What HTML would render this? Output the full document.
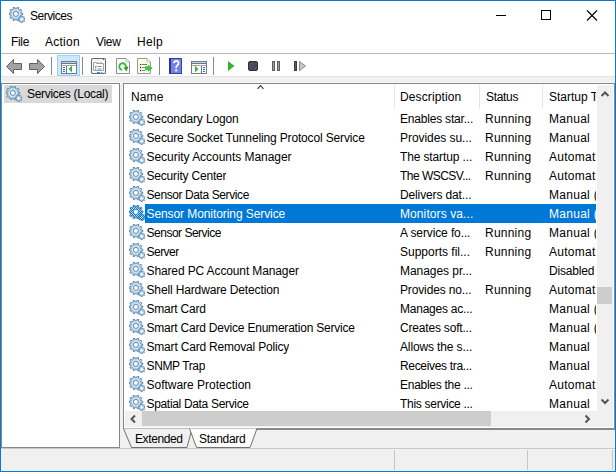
<!DOCTYPE html>
<html><head><meta charset="utf-8"><style>
*{box-sizing:border-box}
html,body{margin:0;padding:0}
body{width:616px;height:472px;overflow:hidden;position:relative;background:#f0f0f0;font-family:"Liberation Sans",sans-serif;font-size:12px;color:#000}
.a{position:absolute}
.t{position:absolute;white-space:nowrap;line-height:14px}
#frame{position:absolute;left:0;top:0;width:616px;height:472px;border:1px solid #0b78d0;z-index:50;pointer-events:none}
.row{position:absolute;left:124px;width:472px;height:19px}
.row .ic{position:absolute;left:5px;top:1px;width:16px;height:16px}
.row span{position:absolute;top:3px;white-space:nowrap;line-height:14px;overflow:hidden}
.c1{left:22.5px}
.c2{left:276px;width:78px}
.c3{left:361px}
.c4{left:425px;width:47px}
.row.sel::before{content:"";position:absolute;left:21px;top:0;right:0;height:19px;background:#0078d7}
.row.sel span{color:#fff}
.hsep{position:absolute;top:85px;width:1px;height:24px;background:#e5e5e5}
</style></head><body>
<div id="frame"></div>
<div class="a" style="left:0;top:0;width:616px;height:76px;background:#fff"></div>
<div class="a" style="left:9px;top:7px;width:16px;height:16px"><svg width="16" height="16" viewBox="0 0 16 16"><path d="M12.13,6.07 L13.75,6.04 L13.75,7.76 L12.13,7.73 L11.62,9.31 L12.95,10.22 L11.93,11.62 L10.65,10.65 L9.31,11.62 L9.84,13.14 L8.19,13.68 L7.73,12.13 L6.07,12.13 L5.61,13.68 L3.96,13.14 L4.49,11.62 L3.15,10.65 L1.87,11.62 L0.85,10.22 L2.18,9.31 L1.67,7.73 L0.05,7.76 L0.05,6.04 L1.67,6.07 L2.18,4.49 L0.85,3.58 L1.87,2.18 L3.15,3.15 L4.49,2.18 L3.96,0.66 L5.61,0.12 L6.07,1.67 L7.73,1.67 L8.19,0.12 L9.84,0.66 L9.31,2.18 L10.65,3.15 L11.93,2.18 L12.95,3.58 L11.62,4.49Z" fill="#c6e2f3" stroke="#5f88ad" stroke-width="1"/><circle cx="6.9" cy="6.9" r="2.5" fill="#fff" stroke="#5a7b9a" stroke-width="0.9"/><path d="M15.15,11.81 L16.06,11.77 L16.06,12.83 L15.15,12.79 L14.78,13.69 L15.45,14.30 L14.70,15.05 L14.09,14.38 L13.19,14.75 L13.23,15.66 L12.17,15.66 L12.21,14.75 L11.31,14.38 L10.70,15.05 L9.95,14.30 L10.62,13.69 L10.25,12.79 L9.34,12.83 L9.34,11.77 L10.25,11.81 L10.62,10.91 L9.95,10.30 L10.70,9.55 L11.31,10.22 L12.21,9.85 L12.17,8.94 L13.23,8.94 L13.19,9.85 L14.09,10.22 L14.70,9.55 L15.45,10.30 L14.78,10.91Z" fill="#c6e2f3" stroke="#5a86ad" stroke-width="0.9"/><circle cx="12.7" cy="12.3" r="1.0" fill="#fff"/></svg></div>
<div class="t" id="ttl" style="left:30px;top:9px;letter-spacing:-0.514px">Services</div>
<div class="a" style="left:496px;top:15px;width:10px;height:1px;background:#000"></div>
<div class="a" style="left:541px;top:10px;width:10px;height:10px;border:1px solid #000"></div>
<svg class="a" style="left:586px;top:10px" width="12" height="11" viewBox="0 0 12 11"><path d="M1,0.5 L11,10.5 M11,0.5 L1,10.5" stroke="#000" stroke-width="1.1"/></svg>
<div class="t" id="mf" style="left:11px;top:35px;letter-spacing:-0.333px">File</div>
<div class="t" id="ma" style="left:45px;top:35px;letter-spacing:0.240px">Action</div>
<div class="t" id="mv" style="left:96px;top:35px;letter-spacing:-0.333px">View</div>
<div class="t" id="mh" style="left:137px;top:35px;letter-spacing:0.333px">Help</div>
<div class="a" style="left:0;top:53px;width:616px;height:1px;background:#b9b9b9"></div>
<svg class="a" style="left:0;top:0" width="616" height="80" viewBox="0 0 616 80">
<!-- back -->
<path d="M6.5,66.5 L13.5,59.5 L13.5,63.5 L21.5,63.5 L21.5,69.5 L13.5,69.5 L13.5,73.5 Z" fill="#a2a2a2" stroke="#626262" stroke-width="1"/>
<!-- forward -->
<path d="M44.5,66.5 L37.5,59.5 L37.5,63.5 L29.5,63.5 L29.5,69.5 L37.5,69.5 L37.5,73.5 Z" fill="#a2a2a2" stroke="#626262" stroke-width="1"/>
<rect x="51" y="57" width="1" height="18" fill="#8a8a8a"/>
<!-- hover button -->
<rect x="57.5" y="55.5" width="22" height="20" fill="#cce8ff" stroke="#99d1ff" stroke-width="1"/>
<rect x="61.5" y="61.5" width="15" height="12" fill="#fff" stroke="#7a7a7a" stroke-width="1"/>
<rect x="62" y="62" width="14" height="1" fill="#d0d0d0"/>
<rect x="62" y="63" width="14" height="1" fill="#5a7aa0"/>
<rect x="62" y="65" width="14" height="1" fill="#a8a8a8"/>
<rect x="66" y="66" width="1" height="7" fill="#5a7aa0"/>
<rect x="63" y="67" width="2" height="1" fill="#2a6ac8"/><rect x="63" y="69" width="2" height="1" fill="#2a6ac8"/><rect x="63" y="71" width="2" height="1" fill="#2a6ac8"/>
<path d="M68.5,69 L72,65.5 L72,72.5 Z" fill="#3cb83c"/>
<rect x="82" y="57" width="1" height="18" fill="#8a8a8a"/>
<!-- properties -->
<rect x="91.5" y="58.5" width="14" height="15" rx="1.2" fill="#fff" stroke="#6a6a6a" stroke-width="1.1"/>
<rect x="92.5" y="59.5" width="12" height="1" fill="#e4e4e4"/>
<rect x="103" y="59" width="1" height="1" fill="#3a5a9a"/>
<path d="M93.5,70.5 L93.5,62.5 L96.5,62.5 L96.5,63.5 L103.5,63.5 L103.5,70.5 Z" fill="#fff" stroke="#9aa4b0" stroke-width="1"/>
<rect x="97" y="62" width="2" height="1" fill="#b0cce8"/><rect x="100" y="62" width="2" height="1" fill="#b0cce8"/>
<rect x="95" y="66" width="1.5" height="1.5" fill="#1e90ff"/><rect x="95" y="68.5" width="1.2" height="1.2" fill="#8a8a8a"/>
<rect x="97.5" y="66" width="4" height="1" fill="#8a8a8a"/><rect x="97.5" y="68.5" width="4" height="1" fill="#8a8a8a"/>
<rect x="97" y="72" width="3" height="1.2" fill="#1e90ff"/><rect x="101" y="72" width="2" height="1" fill="#b0b0b0"/>
<!-- refresh page -->
<path d="M116.5,58.5 L126,58.5 L129.5,62 L129.5,73.5 L116.5,73.5 Z" fill="#fff" stroke="#8e8e9a" stroke-width="1"/><path d="M126,59 L126,62 L129,62" fill="#fff" stroke="#b0b0b8" stroke-width="0.8"/>
<path d="M121.9,69.8 A3.3,3.3 0 1 1 125.8,67.1" fill="none" stroke="#3cbf3c" stroke-width="2"/>
<path d="M123.5,67.5 L128.5,66.5 L126.5,71.5 Z" fill="#2aa02a"/>
<!-- export page -->
<path d="M137.5,58.5 L147,58.5 L150.5,62 L150.5,73.5 L137.5,73.5 Z" fill="#fdfbe6" stroke="#9a9aa6" stroke-width="1"/>
<path d="M147,59 L147,62 L150,62" fill="#fff" stroke="#b0b0b8" stroke-width="0.8"/>
<rect x="140" y="64" width="1.2" height="1.2" fill="#222"/><rect x="140" y="67" width="1.2" height="1.2" fill="#222"/><rect x="140" y="70" width="1.2" height="1.2" fill="#222"/>
<rect x="142" y="64" width="5" height="1" fill="#777"/><rect x="142" y="67" width="3" height="1" fill="#888"/><rect x="142" y="70" width="3" height="1" fill="#888"/>
<path d="M145,66.3 L148,66.3 L148,64.5 L152.8,68.2 L148,71.8 L148,70.2 L145,70.2 Z" fill="#46c546"/>
<rect x="159" y="57" width="1" height="18" fill="#8a8a8a"/>
<!-- help book -->
<rect x="169" y="58" width="13" height="16" fill="#3044b8"/>
<rect x="171" y="59" width="10" height="14" fill="#7482dc"/>
<rect x="169" y="58" width="2" height="16" fill="#2a34a0"/>
<path d="M173.9,63.2 Q174.2,60.8 176.3,60.8 Q178.6,60.8 178.6,63 Q178.6,64.6 177,65.6 Q176.2,66.2 176.2,68" fill="none" stroke="#fff" stroke-width="1.8"/>
<rect x="175.2" y="69.4" width="2" height="2" fill="#fff"/>
<!-- window 2 -->
<rect x="191.5" y="61.5" width="15" height="12" fill="#fff" stroke="#7a7a7a" stroke-width="1"/>
<rect x="192" y="62" width="14" height="1" fill="#d0d0d0"/>
<rect x="192" y="63" width="14" height="1" fill="#5a7aa0"/>
<rect x="192" y="65" width="14" height="1" fill="#a8a8a8"/>
<rect x="201" y="66" width="1" height="7" fill="#5a7aa0"/>
<path d="M195,65.5 L198.5,69 L195,72.5 Z" fill="#3cb83c"/>
<rect x="203" y="67" width="2" height="1" fill="#2a6ac8"/><rect x="203" y="69" width="2" height="1" fill="#2a6ac8"/><rect x="203" y="71" width="2" height="1" fill="#2a6ac8"/>
<rect x="213" y="57" width="1" height="18" fill="#8a8a8a"/>
<!-- play -->
<path d="M228,61 L234.5,66 L228,71 Z" fill="#2fb52f"/>
<!-- stop -->
<rect x="248.5" y="61.5" width="9" height="9" rx="1.5" fill="#4a4a5a" stroke="#30303c" stroke-width="1"/><rect x="251" y="63" width="1" height="1" fill="#8a5a3a"/><rect x="254" y="64" width="1" height="1" fill="#7a3030"/><rect x="250" y="66" width="1" height="1" fill="#7a5a40"/><rect x="253" y="67" width="1" height="1" fill="#6a3a3a"/><rect x="255" y="68" width="1" height="1" fill="#8a6a4a"/><rect x="251" y="69" width="1" height="1" fill="#7a5040"/>
<!-- pause -->
<rect x="272.5" y="61.5" width="2" height="9" fill="#9a9a9a" stroke="#606060" stroke-width="1"/>
<rect x="277.5" y="61.5" width="2" height="9" fill="#9a9a9a" stroke="#606060" stroke-width="1"/>
<!-- resume -->
<rect x="294.5" y="61.5" width="2" height="9" fill="#5a5a6a" stroke="#3a3a48" stroke-width="1"/>
<path d="M299.5,61.5 L305.5,66 L299.5,70.5 Z" fill="#c8c8c8" stroke="#8a8a8a" stroke-width="1"/>
</svg>
<div class="a" style="left:1px;top:76px;width:614px;height:1px;background:#e3e3e3"></div>
<div class="a" style="left:1px;top:82px;width:614px;height:1px;background:#f8f8f8"></div>
<!-- left pane -->
<div class="a" style="left:1px;top:83px;width:119px;height:365px;background:#fff;border:1px solid #828790"></div>
<div class="a" style="left:4px;top:85px;width:108px;height:18px;background:#d9d9d9"></div>
<div class="a" style="left:6px;top:86px;width:16px;height:16px"><svg width="16" height="16" viewBox="0 0 16 16"><path d="M12.13,6.07 L13.75,6.04 L13.75,7.76 L12.13,7.73 L11.62,9.31 L12.95,10.22 L11.93,11.62 L10.65,10.65 L9.31,11.62 L9.84,13.14 L8.19,13.68 L7.73,12.13 L6.07,12.13 L5.61,13.68 L3.96,13.14 L4.49,11.62 L3.15,10.65 L1.87,11.62 L0.85,10.22 L2.18,9.31 L1.67,7.73 L0.05,7.76 L0.05,6.04 L1.67,6.07 L2.18,4.49 L0.85,3.58 L1.87,2.18 L3.15,3.15 L4.49,2.18 L3.96,0.66 L5.61,0.12 L6.07,1.67 L7.73,1.67 L8.19,0.12 L9.84,0.66 L9.31,2.18 L10.65,3.15 L11.93,2.18 L12.95,3.58 L11.62,4.49Z" fill="#c6e2f3" stroke="#5f88ad" stroke-width="1"/><circle cx="6.9" cy="6.9" r="2.5" fill="#fff" stroke="#5a7b9a" stroke-width="0.9"/><path d="M15.15,11.81 L16.06,11.77 L16.06,12.83 L15.15,12.79 L14.78,13.69 L15.45,14.30 L14.70,15.05 L14.09,14.38 L13.19,14.75 L13.23,15.66 L12.17,15.66 L12.21,14.75 L11.31,14.38 L10.70,15.05 L9.95,14.30 L10.62,13.69 L10.25,12.79 L9.34,12.83 L9.34,11.77 L10.25,11.81 L10.62,10.91 L9.95,10.30 L10.70,9.55 L11.31,10.22 L12.21,9.85 L12.17,8.94 L13.23,8.94 L13.19,9.85 L14.09,10.22 L14.70,9.55 L15.45,10.30 L14.78,10.91Z" fill="#c6e2f3" stroke="#5a86ad" stroke-width="0.9"/><circle cx="12.7" cy="12.3" r="1.0" fill="#fff"/></svg></div>
<div class="t" id="sl" style="left:27px;top:87px;letter-spacing:-0.307px">Services (Local)</div>
<!-- right pane -->
<div class="a" style="left:123px;top:83px;width:492px;height:346px;background:#fff;border:1px solid #828790"></div>
<div class="t" id="hn" style="left:131px;top:90px;letter-spacing:0.133px">Name</div>
<svg class="a" style="left:256px;top:84px" width="10" height="6" viewBox="0 0 10 6"><path d="M1.5,4.8 L4.5,1.6 L7.5,4.8" fill="none" stroke="#3a3a3a" stroke-width="1.1"/></svg>
<div class="hsep" style="left:394px"></div>
<div class="t" id="hd" style="left:400px;top:90px;letter-spacing:0.120px">Description</div>
<div class="hsep" style="left:479px"></div>
<div class="t" id="hs" style="left:486px;top:90px;letter-spacing:-0.320px">Status</div>
<div class="hsep" style="left:542px"></div>
<div class="t" style="left:549px;top:90px;width:47px;overflow:hidden">Startup Type</div>
<div class="row" style="top:109px"><div class="ic"><svg width="16" height="16" viewBox="0 0 16 16"><path d="M12.13,6.07 L13.75,6.04 L13.75,7.76 L12.13,7.73 L11.62,9.31 L12.95,10.22 L11.93,11.62 L10.65,10.65 L9.31,11.62 L9.84,13.14 L8.19,13.68 L7.73,12.13 L6.07,12.13 L5.61,13.68 L3.96,13.14 L4.49,11.62 L3.15,10.65 L1.87,11.62 L0.85,10.22 L2.18,9.31 L1.67,7.73 L0.05,7.76 L0.05,6.04 L1.67,6.07 L2.18,4.49 L0.85,3.58 L1.87,2.18 L3.15,3.15 L4.49,2.18 L3.96,0.66 L5.61,0.12 L6.07,1.67 L7.73,1.67 L8.19,0.12 L9.84,0.66 L9.31,2.18 L10.65,3.15 L11.93,2.18 L12.95,3.58 L11.62,4.49Z" fill="#c6e2f3" stroke="#5f88ad" stroke-width="1"/><circle cx="6.9" cy="6.9" r="2.5" fill="#fff" stroke="#5a7b9a" stroke-width="0.9"/><path d="M15.15,11.81 L16.06,11.77 L16.06,12.83 L15.15,12.79 L14.78,13.69 L15.45,14.30 L14.70,15.05 L14.09,14.38 L13.19,14.75 L13.23,15.66 L12.17,15.66 L12.21,14.75 L11.31,14.38 L10.70,15.05 L9.95,14.30 L10.62,13.69 L10.25,12.79 L9.34,12.83 L9.34,11.77 L10.25,11.81 L10.62,10.91 L9.95,10.30 L10.70,9.55 L11.31,10.22 L12.21,9.85 L12.17,8.94 L13.23,8.94 L13.19,9.85 L14.09,10.22 L14.70,9.55 L15.45,10.30 L14.78,10.91Z" fill="#c6e2f3" stroke="#5a86ad" stroke-width="0.9"/><circle cx="12.7" cy="12.3" r="1.0" fill="#fff"/></svg></div><span class="c1" id="r0n" style="letter-spacing:-0.129px">Secondary Logon</span><span class="c2" id="r0d" style="letter-spacing:-0.200px">Enables star...</span><span class="c3" id="r0s" style="letter-spacing:0.233px">Running</span><span class="c4" id="r0t" style="letter-spacing:0.280px">Manual</span></div>
<div class="row" style="top:128px"><div class="ic"><svg width="16" height="16" viewBox="0 0 16 16"><path d="M12.13,6.07 L13.75,6.04 L13.75,7.76 L12.13,7.73 L11.62,9.31 L12.95,10.22 L11.93,11.62 L10.65,10.65 L9.31,11.62 L9.84,13.14 L8.19,13.68 L7.73,12.13 L6.07,12.13 L5.61,13.68 L3.96,13.14 L4.49,11.62 L3.15,10.65 L1.87,11.62 L0.85,10.22 L2.18,9.31 L1.67,7.73 L0.05,7.76 L0.05,6.04 L1.67,6.07 L2.18,4.49 L0.85,3.58 L1.87,2.18 L3.15,3.15 L4.49,2.18 L3.96,0.66 L5.61,0.12 L6.07,1.67 L7.73,1.67 L8.19,0.12 L9.84,0.66 L9.31,2.18 L10.65,3.15 L11.93,2.18 L12.95,3.58 L11.62,4.49Z" fill="#c6e2f3" stroke="#5f88ad" stroke-width="1"/><circle cx="6.9" cy="6.9" r="2.5" fill="#fff" stroke="#5a7b9a" stroke-width="0.9"/><path d="M15.15,11.81 L16.06,11.77 L16.06,12.83 L15.15,12.79 L14.78,13.69 L15.45,14.30 L14.70,15.05 L14.09,14.38 L13.19,14.75 L13.23,15.66 L12.17,15.66 L12.21,14.75 L11.31,14.38 L10.70,15.05 L9.95,14.30 L10.62,13.69 L10.25,12.79 L9.34,12.83 L9.34,11.77 L10.25,11.81 L10.62,10.91 L9.95,10.30 L10.70,9.55 L11.31,10.22 L12.21,9.85 L12.17,8.94 L13.23,8.94 L13.19,9.85 L14.09,10.22 L14.70,9.55 L15.45,10.30 L14.78,10.91Z" fill="#c6e2f3" stroke="#5a86ad" stroke-width="0.9"/><circle cx="12.7" cy="12.3" r="1.0" fill="#fff"/></svg></div><span class="c1" id="r1n" style="letter-spacing:-0.149px">Secure Socket Tunneling Protocol Service</span><span class="c2" id="r1d" style="letter-spacing:-0.062px">Provides su...</span><span class="c3" id="r1s" style="letter-spacing:0.233px">Running</span><span class="c4" id="r1t" style="letter-spacing:0.280px">Manual</span></div>
<div class="row" style="top:147px"><div class="ic"><svg width="16" height="16" viewBox="0 0 16 16"><path d="M12.13,6.07 L13.75,6.04 L13.75,7.76 L12.13,7.73 L11.62,9.31 L12.95,10.22 L11.93,11.62 L10.65,10.65 L9.31,11.62 L9.84,13.14 L8.19,13.68 L7.73,12.13 L6.07,12.13 L5.61,13.68 L3.96,13.14 L4.49,11.62 L3.15,10.65 L1.87,11.62 L0.85,10.22 L2.18,9.31 L1.67,7.73 L0.05,7.76 L0.05,6.04 L1.67,6.07 L2.18,4.49 L0.85,3.58 L1.87,2.18 L3.15,3.15 L4.49,2.18 L3.96,0.66 L5.61,0.12 L6.07,1.67 L7.73,1.67 L8.19,0.12 L9.84,0.66 L9.31,2.18 L10.65,3.15 L11.93,2.18 L12.95,3.58 L11.62,4.49Z" fill="#c6e2f3" stroke="#5f88ad" stroke-width="1"/><circle cx="6.9" cy="6.9" r="2.5" fill="#fff" stroke="#5a7b9a" stroke-width="0.9"/><path d="M15.15,11.81 L16.06,11.77 L16.06,12.83 L15.15,12.79 L14.78,13.69 L15.45,14.30 L14.70,15.05 L14.09,14.38 L13.19,14.75 L13.23,15.66 L12.17,15.66 L12.21,14.75 L11.31,14.38 L10.70,15.05 L9.95,14.30 L10.62,13.69 L10.25,12.79 L9.34,12.83 L9.34,11.77 L10.25,11.81 L10.62,10.91 L9.95,10.30 L10.70,9.55 L11.31,10.22 L12.21,9.85 L12.17,8.94 L13.23,8.94 L13.19,9.85 L14.09,10.22 L14.70,9.55 L15.45,10.30 L14.78,10.91Z" fill="#c6e2f3" stroke="#5a86ad" stroke-width="0.9"/><circle cx="12.7" cy="12.3" r="1.0" fill="#fff"/></svg></div><span class="c1" id="r2n" style="letter-spacing:-0.042px">Security Accounts Manager</span><span class="c2" id="r2d" style="letter-spacing:-0.129px">The startup ...</span><span class="c3" id="r2s" style="letter-spacing:0.233px">Running</span><span class="c4" id="r2t" style="letter-spacing:0.280px">Automat</span></div>
<div class="row" style="top:166px"><div class="ic"><svg width="16" height="16" viewBox="0 0 16 16"><path d="M12.13,6.07 L13.75,6.04 L13.75,7.76 L12.13,7.73 L11.62,9.31 L12.95,10.22 L11.93,11.62 L10.65,10.65 L9.31,11.62 L9.84,13.14 L8.19,13.68 L7.73,12.13 L6.07,12.13 L5.61,13.68 L3.96,13.14 L4.49,11.62 L3.15,10.65 L1.87,11.62 L0.85,10.22 L2.18,9.31 L1.67,7.73 L0.05,7.76 L0.05,6.04 L1.67,6.07 L2.18,4.49 L0.85,3.58 L1.87,2.18 L3.15,3.15 L4.49,2.18 L3.96,0.66 L5.61,0.12 L6.07,1.67 L7.73,1.67 L8.19,0.12 L9.84,0.66 L9.31,2.18 L10.65,3.15 L11.93,2.18 L12.95,3.58 L11.62,4.49Z" fill="#c6e2f3" stroke="#5f88ad" stroke-width="1"/><circle cx="6.9" cy="6.9" r="2.5" fill="#fff" stroke="#5a7b9a" stroke-width="0.9"/><path d="M15.15,11.81 L16.06,11.77 L16.06,12.83 L15.15,12.79 L14.78,13.69 L15.45,14.30 L14.70,15.05 L14.09,14.38 L13.19,14.75 L13.23,15.66 L12.17,15.66 L12.21,14.75 L11.31,14.38 L10.70,15.05 L9.95,14.30 L10.62,13.69 L10.25,12.79 L9.34,12.83 L9.34,11.77 L10.25,11.81 L10.62,10.91 L9.95,10.30 L10.70,9.55 L11.31,10.22 L12.21,9.85 L12.17,8.94 L13.23,8.94 L13.19,9.85 L14.09,10.22 L14.70,9.55 L15.45,10.30 L14.78,10.91Z" fill="#c6e2f3" stroke="#5a86ad" stroke-width="0.9"/><circle cx="12.7" cy="12.3" r="1.0" fill="#fff"/></svg></div><span class="c1" id="r3n" style="letter-spacing:-0.186px">Security Center</span><span class="c2" id="r3d" style="letter-spacing:-0.527px">The WSCSV...</span><span class="c3" id="r3s" style="letter-spacing:0.233px">Running</span><span class="c4" id="r3t" style="letter-spacing:0.280px">Automat</span></div>
<div class="row" style="top:185px"><div class="ic"><svg width="16" height="16" viewBox="0 0 16 16"><path d="M12.13,6.07 L13.75,6.04 L13.75,7.76 L12.13,7.73 L11.62,9.31 L12.95,10.22 L11.93,11.62 L10.65,10.65 L9.31,11.62 L9.84,13.14 L8.19,13.68 L7.73,12.13 L6.07,12.13 L5.61,13.68 L3.96,13.14 L4.49,11.62 L3.15,10.65 L1.87,11.62 L0.85,10.22 L2.18,9.31 L1.67,7.73 L0.05,7.76 L0.05,6.04 L1.67,6.07 L2.18,4.49 L0.85,3.58 L1.87,2.18 L3.15,3.15 L4.49,2.18 L3.96,0.66 L5.61,0.12 L6.07,1.67 L7.73,1.67 L8.19,0.12 L9.84,0.66 L9.31,2.18 L10.65,3.15 L11.93,2.18 L12.95,3.58 L11.62,4.49Z" fill="#c6e2f3" stroke="#5f88ad" stroke-width="1"/><circle cx="6.9" cy="6.9" r="2.5" fill="#fff" stroke="#5a7b9a" stroke-width="0.9"/><path d="M15.15,11.81 L16.06,11.77 L16.06,12.83 L15.15,12.79 L14.78,13.69 L15.45,14.30 L14.70,15.05 L14.09,14.38 L13.19,14.75 L13.23,15.66 L12.17,15.66 L12.21,14.75 L11.31,14.38 L10.70,15.05 L9.95,14.30 L10.62,13.69 L10.25,12.79 L9.34,12.83 L9.34,11.77 L10.25,11.81 L10.62,10.91 L9.95,10.30 L10.70,9.55 L11.31,10.22 L12.21,9.85 L12.17,8.94 L13.23,8.94 L13.19,9.85 L14.09,10.22 L14.70,9.55 L15.45,10.30 L14.78,10.91Z" fill="#c6e2f3" stroke="#5a86ad" stroke-width="0.9"/><circle cx="12.7" cy="12.3" r="1.0" fill="#fff"/></svg></div><span class="c1" id="r4n" style="letter-spacing:-0.400px">Sensor Data Service</span><span class="c2" id="r4d" style="letter-spacing:-0.129px">Delivers dat...</span><span class="c4" id="r4t" style="letter-spacing:0.280px">Manual (</span></div>
<div class="row sel" style="top:204px"><div class="ic"><svg width="16" height="16" viewBox="0 0 16 16"><path d="M12.13,6.07 L13.75,6.04 L13.75,7.76 L12.13,7.73 L11.62,9.31 L12.95,10.22 L11.93,11.62 L10.65,10.65 L9.31,11.62 L9.84,13.14 L8.19,13.68 L7.73,12.13 L6.07,12.13 L5.61,13.68 L3.96,13.14 L4.49,11.62 L3.15,10.65 L1.87,11.62 L0.85,10.22 L2.18,9.31 L1.67,7.73 L0.05,7.76 L0.05,6.04 L1.67,6.07 L2.18,4.49 L0.85,3.58 L1.87,2.18 L3.15,3.15 L4.49,2.18 L3.96,0.66 L5.61,0.12 L6.07,1.67 L7.73,1.67 L8.19,0.12 L9.84,0.66 L9.31,2.18 L10.65,3.15 L11.93,2.18 L12.95,3.58 L11.62,4.49Z" fill="#c6e2f3" stroke="#5f88ad" stroke-width="1"/><circle cx="6.9" cy="6.9" r="2.5" fill="#fff" stroke="#5a7b9a" stroke-width="0.9"/><path d="M15.15,11.81 L16.06,11.77 L16.06,12.83 L15.15,12.79 L14.78,13.69 L15.45,14.30 L14.70,15.05 L14.09,14.38 L13.19,14.75 L13.23,15.66 L12.17,15.66 L12.21,14.75 L11.31,14.38 L10.70,15.05 L9.95,14.30 L10.62,13.69 L10.25,12.79 L9.34,12.83 L9.34,11.77 L10.25,11.81 L10.62,10.91 L9.95,10.30 L10.70,9.55 L11.31,10.22 L12.21,9.85 L12.17,8.94 L13.23,8.94 L13.19,9.85 L14.09,10.22 L14.70,9.55 L15.45,10.30 L14.78,10.91Z" fill="#c6e2f3" stroke="#5a86ad" stroke-width="0.9"/><circle cx="12.7" cy="12.3" r="1.0" fill="#fff"/><defs><pattern id="chk" patternUnits="userSpaceOnUse" width="2" height="2"><rect x="0" y="0" width="1" height="1" fill="#0078d7"/><rect x="1" y="1" width="1" height="1" fill="#0078d7"/></pattern></defs><path d="M12.13,6.07 L13.75,6.04 L13.75,7.76 L12.13,7.73 L11.62,9.31 L12.95,10.22 L11.93,11.62 L10.65,10.65 L9.31,11.62 L9.84,13.14 L8.19,13.68 L7.73,12.13 L6.07,12.13 L5.61,13.68 L3.96,13.14 L4.49,11.62 L3.15,10.65 L1.87,11.62 L0.85,10.22 L2.18,9.31 L1.67,7.73 L0.05,7.76 L0.05,6.04 L1.67,6.07 L2.18,4.49 L0.85,3.58 L1.87,2.18 L3.15,3.15 L4.49,2.18 L3.96,0.66 L5.61,0.12 L6.07,1.67 L7.73,1.67 L8.19,0.12 L9.84,0.66 L9.31,2.18 L10.65,3.15 L11.93,2.18 L12.95,3.58 L11.62,4.49Z" fill="url(#chk)" stroke="url(#chk)" stroke-width="1"/><path d="M15.15,11.81 L16.06,11.77 L16.06,12.83 L15.15,12.79 L14.78,13.69 L15.45,14.30 L14.70,15.05 L14.09,14.38 L13.19,14.75 L13.23,15.66 L12.17,15.66 L12.21,14.75 L11.31,14.38 L10.70,15.05 L9.95,14.30 L10.62,13.69 L10.25,12.79 L9.34,12.83 L9.34,11.77 L10.25,11.81 L10.62,10.91 L9.95,10.30 L10.70,9.55 L11.31,10.22 L12.21,9.85 L12.17,8.94 L13.23,8.94 L13.19,9.85 L14.09,10.22 L14.70,9.55 L15.45,10.30 L14.78,10.91Z" fill="url(#chk)" stroke="url(#chk)" stroke-width="0.9"/><circle cx="6.9" cy="6.9" r="2.1" fill="#fff"/></svg></div><span class="c1" id="r5n" style="letter-spacing:-0.083px">Sensor Monitoring Service</span><span class="c2" id="r5d" style="letter-spacing:0.092px">Monitors va...</span><span class="c4" id="r5t" style="letter-spacing:0.280px">Manual (</span></div>
<div class="row" style="top:223px"><div class="ic"><svg width="16" height="16" viewBox="0 0 16 16"><path d="M12.13,6.07 L13.75,6.04 L13.75,7.76 L12.13,7.73 L11.62,9.31 L12.95,10.22 L11.93,11.62 L10.65,10.65 L9.31,11.62 L9.84,13.14 L8.19,13.68 L7.73,12.13 L6.07,12.13 L5.61,13.68 L3.96,13.14 L4.49,11.62 L3.15,10.65 L1.87,11.62 L0.85,10.22 L2.18,9.31 L1.67,7.73 L0.05,7.76 L0.05,6.04 L1.67,6.07 L2.18,4.49 L0.85,3.58 L1.87,2.18 L3.15,3.15 L4.49,2.18 L3.96,0.66 L5.61,0.12 L6.07,1.67 L7.73,1.67 L8.19,0.12 L9.84,0.66 L9.31,2.18 L10.65,3.15 L11.93,2.18 L12.95,3.58 L11.62,4.49Z" fill="#c6e2f3" stroke="#5f88ad" stroke-width="1"/><circle cx="6.9" cy="6.9" r="2.5" fill="#fff" stroke="#5a7b9a" stroke-width="0.9"/><path d="M15.15,11.81 L16.06,11.77 L16.06,12.83 L15.15,12.79 L14.78,13.69 L15.45,14.30 L14.70,15.05 L14.09,14.38 L13.19,14.75 L13.23,15.66 L12.17,15.66 L12.21,14.75 L11.31,14.38 L10.70,15.05 L9.95,14.30 L10.62,13.69 L10.25,12.79 L9.34,12.83 L9.34,11.77 L10.25,11.81 L10.62,10.91 L9.95,10.30 L10.70,9.55 L11.31,10.22 L12.21,9.85 L12.17,8.94 L13.23,8.94 L13.19,9.85 L14.09,10.22 L14.70,9.55 L15.45,10.30 L14.78,10.91Z" fill="#c6e2f3" stroke="#5a86ad" stroke-width="0.9"/><circle cx="12.7" cy="12.3" r="1.0" fill="#fff"/></svg></div><span class="c1" id="r6n" style="letter-spacing:-0.492px">Sensor Service</span><span class="c2" id="r6d" style="letter-spacing:-0.114px">A service fo...</span><span class="c3" id="r6s" style="letter-spacing:0.233px">Running</span><span class="c4" id="r6t" style="letter-spacing:0.280px">Manual (</span></div>
<div class="row" style="top:242px"><div class="ic"><svg width="16" height="16" viewBox="0 0 16 16"><path d="M12.13,6.07 L13.75,6.04 L13.75,7.76 L12.13,7.73 L11.62,9.31 L12.95,10.22 L11.93,11.62 L10.65,10.65 L9.31,11.62 L9.84,13.14 L8.19,13.68 L7.73,12.13 L6.07,12.13 L5.61,13.68 L3.96,13.14 L4.49,11.62 L3.15,10.65 L1.87,11.62 L0.85,10.22 L2.18,9.31 L1.67,7.73 L0.05,7.76 L0.05,6.04 L1.67,6.07 L2.18,4.49 L0.85,3.58 L1.87,2.18 L3.15,3.15 L4.49,2.18 L3.96,0.66 L5.61,0.12 L6.07,1.67 L7.73,1.67 L8.19,0.12 L9.84,0.66 L9.31,2.18 L10.65,3.15 L11.93,2.18 L12.95,3.58 L11.62,4.49Z" fill="#c6e2f3" stroke="#5f88ad" stroke-width="1"/><circle cx="6.9" cy="6.9" r="2.5" fill="#fff" stroke="#5a7b9a" stroke-width="0.9"/><path d="M15.15,11.81 L16.06,11.77 L16.06,12.83 L15.15,12.79 L14.78,13.69 L15.45,14.30 L14.70,15.05 L14.09,14.38 L13.19,14.75 L13.23,15.66 L12.17,15.66 L12.21,14.75 L11.31,14.38 L10.70,15.05 L9.95,14.30 L10.62,13.69 L10.25,12.79 L9.34,12.83 L9.34,11.77 L10.25,11.81 L10.62,10.91 L9.95,10.30 L10.70,9.55 L11.31,10.22 L12.21,9.85 L12.17,8.94 L13.23,8.94 L13.19,9.85 L14.09,10.22 L14.70,9.55 L15.45,10.30 L14.78,10.91Z" fill="#c6e2f3" stroke="#5a86ad" stroke-width="0.9"/><circle cx="12.7" cy="12.3" r="1.0" fill="#fff"/></svg></div><span class="c1" id="r7n" style="letter-spacing:-0.520px">Server</span><span class="c2" id="r7d" style="letter-spacing:0.000px">Supports fil...</span><span class="c3" id="r7s" style="letter-spacing:0.233px">Running</span><span class="c4" id="r7t" style="letter-spacing:0.280px">Automat</span></div>
<div class="row" style="top:261px"><div class="ic"><svg width="16" height="16" viewBox="0 0 16 16"><path d="M12.13,6.07 L13.75,6.04 L13.75,7.76 L12.13,7.73 L11.62,9.31 L12.95,10.22 L11.93,11.62 L10.65,10.65 L9.31,11.62 L9.84,13.14 L8.19,13.68 L7.73,12.13 L6.07,12.13 L5.61,13.68 L3.96,13.14 L4.49,11.62 L3.15,10.65 L1.87,11.62 L0.85,10.22 L2.18,9.31 L1.67,7.73 L0.05,7.76 L0.05,6.04 L1.67,6.07 L2.18,4.49 L0.85,3.58 L1.87,2.18 L3.15,3.15 L4.49,2.18 L3.96,0.66 L5.61,0.12 L6.07,1.67 L7.73,1.67 L8.19,0.12 L9.84,0.66 L9.31,2.18 L10.65,3.15 L11.93,2.18 L12.95,3.58 L11.62,4.49Z" fill="#c6e2f3" stroke="#5f88ad" stroke-width="1"/><circle cx="6.9" cy="6.9" r="2.5" fill="#fff" stroke="#5a7b9a" stroke-width="0.9"/><path d="M15.15,11.81 L16.06,11.77 L16.06,12.83 L15.15,12.79 L14.78,13.69 L15.45,14.30 L14.70,15.05 L14.09,14.38 L13.19,14.75 L13.23,15.66 L12.17,15.66 L12.21,14.75 L11.31,14.38 L10.70,15.05 L9.95,14.30 L10.62,13.69 L10.25,12.79 L9.34,12.83 L9.34,11.77 L10.25,11.81 L10.62,10.91 L9.95,10.30 L10.70,9.55 L11.31,10.22 L12.21,9.85 L12.17,8.94 L13.23,8.94 L13.19,9.85 L14.09,10.22 L14.70,9.55 L15.45,10.30 L14.78,10.91Z" fill="#c6e2f3" stroke="#5a86ad" stroke-width="0.9"/><circle cx="12.7" cy="12.3" r="1.0" fill="#fff"/></svg></div><span class="c1" id="r8n" style="letter-spacing:-0.125px">Shared PC Account Manager</span><span class="c2" id="r8d" style="letter-spacing:-0.050px">Manages pr...</span><span class="c4" id="r8t" style="letter-spacing:-0.186px">Disabled</span></div>
<div class="row" style="top:280px"><div class="ic"><svg width="16" height="16" viewBox="0 0 16 16"><path d="M12.13,6.07 L13.75,6.04 L13.75,7.76 L12.13,7.73 L11.62,9.31 L12.95,10.22 L11.93,11.62 L10.65,10.65 L9.31,11.62 L9.84,13.14 L8.19,13.68 L7.73,12.13 L6.07,12.13 L5.61,13.68 L3.96,13.14 L4.49,11.62 L3.15,10.65 L1.87,11.62 L0.85,10.22 L2.18,9.31 L1.67,7.73 L0.05,7.76 L0.05,6.04 L1.67,6.07 L2.18,4.49 L0.85,3.58 L1.87,2.18 L3.15,3.15 L4.49,2.18 L3.96,0.66 L5.61,0.12 L6.07,1.67 L7.73,1.67 L8.19,0.12 L9.84,0.66 L9.31,2.18 L10.65,3.15 L11.93,2.18 L12.95,3.58 L11.62,4.49Z" fill="#c6e2f3" stroke="#5f88ad" stroke-width="1"/><circle cx="6.9" cy="6.9" r="2.5" fill="#fff" stroke="#5a7b9a" stroke-width="0.9"/><path d="M15.15,11.81 L16.06,11.77 L16.06,12.83 L15.15,12.79 L14.78,13.69 L15.45,14.30 L14.70,15.05 L14.09,14.38 L13.19,14.75 L13.23,15.66 L12.17,15.66 L12.21,14.75 L11.31,14.38 L10.70,15.05 L9.95,14.30 L10.62,13.69 L10.25,12.79 L9.34,12.83 L9.34,11.77 L10.25,11.81 L10.62,10.91 L9.95,10.30 L10.70,9.55 L11.31,10.22 L12.21,9.85 L12.17,8.94 L13.23,8.94 L13.19,9.85 L14.09,10.22 L14.70,9.55 L15.45,10.30 L14.78,10.91Z" fill="#c6e2f3" stroke="#5a86ad" stroke-width="0.9"/><circle cx="12.7" cy="12.3" r="1.0" fill="#fff"/></svg></div><span class="c1" id="r9n" style="letter-spacing:-0.139px">Shell Hardware Detection</span><span class="c2" id="r9d" style="letter-spacing:-0.138px">Provides no...</span><span class="c3" id="r9s" style="letter-spacing:0.233px">Running</span><span class="c4" id="r9t" style="letter-spacing:0.280px">Automat</span></div>
<div class="row" style="top:299px"><div class="ic"><svg width="16" height="16" viewBox="0 0 16 16"><path d="M12.13,6.07 L13.75,6.04 L13.75,7.76 L12.13,7.73 L11.62,9.31 L12.95,10.22 L11.93,11.62 L10.65,10.65 L9.31,11.62 L9.84,13.14 L8.19,13.68 L7.73,12.13 L6.07,12.13 L5.61,13.68 L3.96,13.14 L4.49,11.62 L3.15,10.65 L1.87,11.62 L0.85,10.22 L2.18,9.31 L1.67,7.73 L0.05,7.76 L0.05,6.04 L1.67,6.07 L2.18,4.49 L0.85,3.58 L1.87,2.18 L3.15,3.15 L4.49,2.18 L3.96,0.66 L5.61,0.12 L6.07,1.67 L7.73,1.67 L8.19,0.12 L9.84,0.66 L9.31,2.18 L10.65,3.15 L11.93,2.18 L12.95,3.58 L11.62,4.49Z" fill="#c6e2f3" stroke="#5f88ad" stroke-width="1"/><circle cx="6.9" cy="6.9" r="2.5" fill="#fff" stroke="#5a7b9a" stroke-width="0.9"/><path d="M15.15,11.81 L16.06,11.77 L16.06,12.83 L15.15,12.79 L14.78,13.69 L15.45,14.30 L14.70,15.05 L14.09,14.38 L13.19,14.75 L13.23,15.66 L12.17,15.66 L12.21,14.75 L11.31,14.38 L10.70,15.05 L9.95,14.30 L10.62,13.69 L10.25,12.79 L9.34,12.83 L9.34,11.77 L10.25,11.81 L10.62,10.91 L9.95,10.30 L10.70,9.55 L11.31,10.22 L12.21,9.85 L12.17,8.94 L13.23,8.94 L13.19,9.85 L14.09,10.22 L14.70,9.55 L15.45,10.30 L14.78,10.91Z" fill="#c6e2f3" stroke="#5a86ad" stroke-width="0.9"/><circle cx="12.7" cy="12.3" r="1.0" fill="#fff"/></svg></div><span class="c1" id="r10n" style="letter-spacing:-0.222px">Smart Card</span><span class="c2" id="r10d" style="letter-spacing:-0.233px">Manages ac...</span><span class="c4" id="r10t" style="letter-spacing:0.280px">Manual (</span></div>
<div class="row" style="top:318px"><div class="ic"><svg width="16" height="16" viewBox="0 0 16 16"><path d="M12.13,6.07 L13.75,6.04 L13.75,7.76 L12.13,7.73 L11.62,9.31 L12.95,10.22 L11.93,11.62 L10.65,10.65 L9.31,11.62 L9.84,13.14 L8.19,13.68 L7.73,12.13 L6.07,12.13 L5.61,13.68 L3.96,13.14 L4.49,11.62 L3.15,10.65 L1.87,11.62 L0.85,10.22 L2.18,9.31 L1.67,7.73 L0.05,7.76 L0.05,6.04 L1.67,6.07 L2.18,4.49 L0.85,3.58 L1.87,2.18 L3.15,3.15 L4.49,2.18 L3.96,0.66 L5.61,0.12 L6.07,1.67 L7.73,1.67 L8.19,0.12 L9.84,0.66 L9.31,2.18 L10.65,3.15 L11.93,2.18 L12.95,3.58 L11.62,4.49Z" fill="#c6e2f3" stroke="#5f88ad" stroke-width="1"/><circle cx="6.9" cy="6.9" r="2.5" fill="#fff" stroke="#5a7b9a" stroke-width="0.9"/><path d="M15.15,11.81 L16.06,11.77 L16.06,12.83 L15.15,12.79 L14.78,13.69 L15.45,14.30 L14.70,15.05 L14.09,14.38 L13.19,14.75 L13.23,15.66 L12.17,15.66 L12.21,14.75 L11.31,14.38 L10.70,15.05 L9.95,14.30 L10.62,13.69 L10.25,12.79 L9.34,12.83 L9.34,11.77 L10.25,11.81 L10.62,10.91 L9.95,10.30 L10.70,9.55 L11.31,10.22 L12.21,9.85 L12.17,8.94 L13.23,8.94 L13.19,9.85 L14.09,10.22 L14.70,9.55 L15.45,10.30 L14.78,10.91Z" fill="#c6e2f3" stroke="#5a86ad" stroke-width="0.9"/><circle cx="12.7" cy="12.3" r="1.0" fill="#fff"/></svg></div><span class="c1" id="r11n" style="letter-spacing:-0.211px">Smart Card Device Enumeration Service</span><span class="c2" id="r11d" style="letter-spacing:-0.186px">Creates soft...</span><span class="c4" id="r11t" style="letter-spacing:0.280px">Manual (</span></div>
<div class="row" style="top:337px"><div class="ic"><svg width="16" height="16" viewBox="0 0 16 16"><path d="M12.13,6.07 L13.75,6.04 L13.75,7.76 L12.13,7.73 L11.62,9.31 L12.95,10.22 L11.93,11.62 L10.65,10.65 L9.31,11.62 L9.84,13.14 L8.19,13.68 L7.73,12.13 L6.07,12.13 L5.61,13.68 L3.96,13.14 L4.49,11.62 L3.15,10.65 L1.87,11.62 L0.85,10.22 L2.18,9.31 L1.67,7.73 L0.05,7.76 L0.05,6.04 L1.67,6.07 L2.18,4.49 L0.85,3.58 L1.87,2.18 L3.15,3.15 L4.49,2.18 L3.96,0.66 L5.61,0.12 L6.07,1.67 L7.73,1.67 L8.19,0.12 L9.84,0.66 L9.31,2.18 L10.65,3.15 L11.93,2.18 L12.95,3.58 L11.62,4.49Z" fill="#c6e2f3" stroke="#5f88ad" stroke-width="1"/><circle cx="6.9" cy="6.9" r="2.5" fill="#fff" stroke="#5a7b9a" stroke-width="0.9"/><path d="M15.15,11.81 L16.06,11.77 L16.06,12.83 L15.15,12.79 L14.78,13.69 L15.45,14.30 L14.70,15.05 L14.09,14.38 L13.19,14.75 L13.23,15.66 L12.17,15.66 L12.21,14.75 L11.31,14.38 L10.70,15.05 L9.95,14.30 L10.62,13.69 L10.25,12.79 L9.34,12.83 L9.34,11.77 L10.25,11.81 L10.62,10.91 L9.95,10.30 L10.70,9.55 L11.31,10.22 L12.21,9.85 L12.17,8.94 L13.23,8.94 L13.19,9.85 L14.09,10.22 L14.70,9.55 L15.45,10.30 L14.78,10.91Z" fill="#c6e2f3" stroke="#5a86ad" stroke-width="0.9"/><circle cx="12.7" cy="12.3" r="1.0" fill="#fff"/></svg></div><span class="c1" id="r12n" style="letter-spacing:-0.192px">Smart Card Removal Policy</span><span class="c2" id="r12d" style="letter-spacing:-0.129px">Allows the s...</span><span class="c4" id="r12t" style="letter-spacing:0.280px">Manual</span></div>
<div class="row" style="top:356px"><div class="ic"><svg width="16" height="16" viewBox="0 0 16 16"><path d="M12.13,6.07 L13.75,6.04 L13.75,7.76 L12.13,7.73 L11.62,9.31 L12.95,10.22 L11.93,11.62 L10.65,10.65 L9.31,11.62 L9.84,13.14 L8.19,13.68 L7.73,12.13 L6.07,12.13 L5.61,13.68 L3.96,13.14 L4.49,11.62 L3.15,10.65 L1.87,11.62 L0.85,10.22 L2.18,9.31 L1.67,7.73 L0.05,7.76 L0.05,6.04 L1.67,6.07 L2.18,4.49 L0.85,3.58 L1.87,2.18 L3.15,3.15 L4.49,2.18 L3.96,0.66 L5.61,0.12 L6.07,1.67 L7.73,1.67 L8.19,0.12 L9.84,0.66 L9.31,2.18 L10.65,3.15 L11.93,2.18 L12.95,3.58 L11.62,4.49Z" fill="#c6e2f3" stroke="#5f88ad" stroke-width="1"/><circle cx="6.9" cy="6.9" r="2.5" fill="#fff" stroke="#5a7b9a" stroke-width="0.9"/><path d="M15.15,11.81 L16.06,11.77 L16.06,12.83 L15.15,12.79 L14.78,13.69 L15.45,14.30 L14.70,15.05 L14.09,14.38 L13.19,14.75 L13.23,15.66 L12.17,15.66 L12.21,14.75 L11.31,14.38 L10.70,15.05 L9.95,14.30 L10.62,13.69 L10.25,12.79 L9.34,12.83 L9.34,11.77 L10.25,11.81 L10.62,10.91 L9.95,10.30 L10.70,9.55 L11.31,10.22 L12.21,9.85 L12.17,8.94 L13.23,8.94 L13.19,9.85 L14.09,10.22 L14.70,9.55 L15.45,10.30 L14.78,10.91Z" fill="#c6e2f3" stroke="#5a86ad" stroke-width="0.9"/><circle cx="12.7" cy="12.3" r="1.0" fill="#fff"/></svg></div><span class="c1" id="r13n" style="letter-spacing:-0.375px">SNMP Trap</span><span class="c2" id="r13d" style="letter-spacing:-0.329px">Receives tra...</span><span class="c4" id="r13t" style="letter-spacing:0.280px">Manual</span></div>
<div class="row" style="top:375px"><div class="ic"><svg width="16" height="16" viewBox="0 0 16 16"><path d="M12.13,6.07 L13.75,6.04 L13.75,7.76 L12.13,7.73 L11.62,9.31 L12.95,10.22 L11.93,11.62 L10.65,10.65 L9.31,11.62 L9.84,13.14 L8.19,13.68 L7.73,12.13 L6.07,12.13 L5.61,13.68 L3.96,13.14 L4.49,11.62 L3.15,10.65 L1.87,11.62 L0.85,10.22 L2.18,9.31 L1.67,7.73 L0.05,7.76 L0.05,6.04 L1.67,6.07 L2.18,4.49 L0.85,3.58 L1.87,2.18 L3.15,3.15 L4.49,2.18 L3.96,0.66 L5.61,0.12 L6.07,1.67 L7.73,1.67 L8.19,0.12 L9.84,0.66 L9.31,2.18 L10.65,3.15 L11.93,2.18 L12.95,3.58 L11.62,4.49Z" fill="#c6e2f3" stroke="#5f88ad" stroke-width="1"/><circle cx="6.9" cy="6.9" r="2.5" fill="#fff" stroke="#5a7b9a" stroke-width="0.9"/><path d="M15.15,11.81 L16.06,11.77 L16.06,12.83 L15.15,12.79 L14.78,13.69 L15.45,14.30 L14.70,15.05 L14.09,14.38 L13.19,14.75 L13.23,15.66 L12.17,15.66 L12.21,14.75 L11.31,14.38 L10.70,15.05 L9.95,14.30 L10.62,13.69 L10.25,12.79 L9.34,12.83 L9.34,11.77 L10.25,11.81 L10.62,10.91 L9.95,10.30 L10.70,9.55 L11.31,10.22 L12.21,9.85 L12.17,8.94 L13.23,8.94 L13.19,9.85 L14.09,10.22 L14.70,9.55 L15.45,10.30 L14.78,10.91Z" fill="#c6e2f3" stroke="#5a86ad" stroke-width="0.9"/><circle cx="12.7" cy="12.3" r="1.0" fill="#fff"/></svg></div><span class="c1" id="r14n" style="letter-spacing:-0.011px">Software Protection</span><span class="c2" id="r14d" style="letter-spacing:-0.271px">Enables the ...</span><span class="c4" id="r14t" style="letter-spacing:0.280px">Automat</span></div>
<div class="row" style="top:394px"><div class="ic"><svg width="16" height="16" viewBox="0 0 16 16"><path d="M12.13,6.07 L13.75,6.04 L13.75,7.76 L12.13,7.73 L11.62,9.31 L12.95,10.22 L11.93,11.62 L10.65,10.65 L9.31,11.62 L9.84,13.14 L8.19,13.68 L7.73,12.13 L6.07,12.13 L5.61,13.68 L3.96,13.14 L4.49,11.62 L3.15,10.65 L1.87,11.62 L0.85,10.22 L2.18,9.31 L1.67,7.73 L0.05,7.76 L0.05,6.04 L1.67,6.07 L2.18,4.49 L0.85,3.58 L1.87,2.18 L3.15,3.15 L4.49,2.18 L3.96,0.66 L5.61,0.12 L6.07,1.67 L7.73,1.67 L8.19,0.12 L9.84,0.66 L9.31,2.18 L10.65,3.15 L11.93,2.18 L12.95,3.58 L11.62,4.49Z" fill="#c6e2f3" stroke="#5f88ad" stroke-width="1"/><circle cx="6.9" cy="6.9" r="2.5" fill="#fff" stroke="#5a7b9a" stroke-width="0.9"/><path d="M15.15,11.81 L16.06,11.77 L16.06,12.83 L15.15,12.79 L14.78,13.69 L15.45,14.30 L14.70,15.05 L14.09,14.38 L13.19,14.75 L13.23,15.66 L12.17,15.66 L12.21,14.75 L11.31,14.38 L10.70,15.05 L9.95,14.30 L10.62,13.69 L10.25,12.79 L9.34,12.83 L9.34,11.77 L10.25,11.81 L10.62,10.91 L9.95,10.30 L10.70,9.55 L11.31,10.22 L12.21,9.85 L12.17,8.94 L13.23,8.94 L13.19,9.85 L14.09,10.22 L14.70,9.55 L15.45,10.30 L14.78,10.91Z" fill="#c6e2f3" stroke="#5a86ad" stroke-width="0.9"/><circle cx="12.7" cy="12.3" r="1.0" fill="#fff"/></svg></div><span class="c1" id="r15n" style="letter-spacing:-0.326px">Spatial Data Service</span><span class="c2" id="r15d" style="letter-spacing:-0.293px">This service ...</span><span class="c4" id="r15t" style="letter-spacing:0.280px">Manual</span></div>
<!-- vscroll -->
<div class="a" style="left:597px;top:85px;width:16px;height:342px;background:#f0f0f0"></div>
<div class="a" style="left:597px;top:287px;width:15px;height:17px;background:#cdcdcd"></div>
<svg class="a" style="left:597px;top:85px" width="16" height="17" viewBox="0 0 16 17"><path d="M4.5,11 L8,7.5 L11.5,11" fill="none" stroke="#555" stroke-width="2"/></svg>
<svg class="a" style="left:597px;top:393px" width="16" height="17" viewBox="0 0 16 17"><path d="M4.5,6.5 L8,10 L11.5,6.5" fill="none" stroke="#555" stroke-width="2"/></svg>
<!-- hscroll -->
<div class="a" style="left:125px;top:411px;width:488px;height:16px;background:#f0f0f0"></div>
<div class="a" style="left:142px;top:411px;width:349px;height:15px;background:#cdcdcd"></div>
<svg class="a" style="left:125px;top:411px" width="17" height="16" viewBox="0 0 17 16"><path d="M10,4.5 L6.5,8 L10,11.5" fill="none" stroke="#555" stroke-width="2"/></svg>
<svg class="a" style="left:580px;top:411px" width="17" height="16" viewBox="0 0 17 16"><path d="M5.5,4.5 L9,8 L5.5,11.5" fill="none" stroke="#555" stroke-width="2"/></svg>
<!-- tabs -->
<div class="a" style="left:250px;top:429px;width:365px;height:1px;background:#8a8a8a"></div>
<svg class="a" style="left:120px;top:428px" width="150" height="21" viewBox="0 0 150 21">
<path d="M3.5,0.5 L11.5,19.5 L67,19.5 L72,0.5" fill="#f0f0f0" stroke="#707070" stroke-width="1"/>
<path d="M69.5,0.5 L76.5,19.5 L130,19.5 L137,0.5" fill="#fff" stroke="#707070" stroke-width="1"/>
</svg>
<div class="t" id="te" style="left:135px;top:432px;letter-spacing:-0.400px">Extended</div>
<div class="t" id="tsd" style="left:199px;top:432px;letter-spacing:-0.280px">Standard</div>
<!-- status bar -->
<div class="a" style="left:1px;top:448px;width:614px;height:1px;background:#c9c9c9"></div>
<div class="a" style="left:394px;top:450px;width:1px;height:20px;background:#c6c6c6"></div>
<div class="a" style="left:527px;top:450px;width:1px;height:20px;background:#c6c6c6"></div>
<div class="a" style="left:612px;top:450px;width:1px;height:20px;background:#c6c6c6"></div>
</body></html>
